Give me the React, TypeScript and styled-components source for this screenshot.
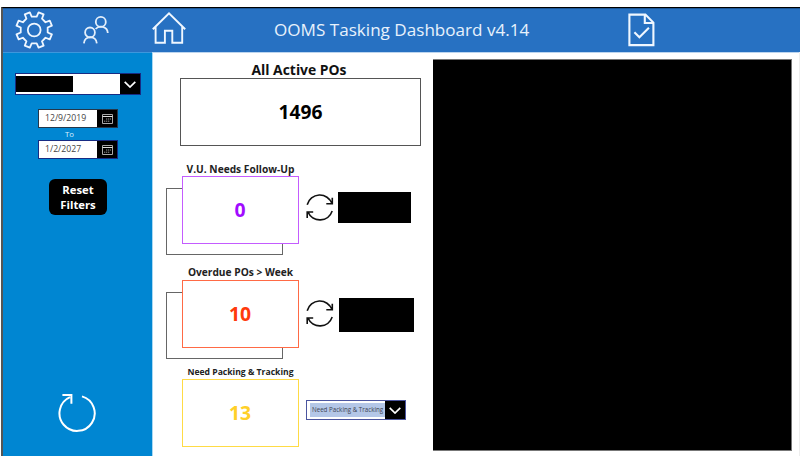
import React from "react";
import styled, { createGlobalStyle } from "styled-components";

const GlobalStyle = createGlobalStyle`
  *, *::before { box-sizing: border-box; }
  body { margin: 0; background: #fff; font-family: "Open Sans", sans-serif; overflow: hidden; }
  svg { display: block; flex: none; fill: none; }
`;

const Page = styled.div`
  width: 800px;
  height: 463px;
  padding: 7px 0 7px 1px;
`;

const Shell = styled.div`
  height: 449px;
  display: flex;
  flex-direction: column;
  border-top: 1px solid #000;
  border-left: 2px solid #555;
`;

const Header = styled.header`
  height: 44px;
  flex: none;
  display: flex;
  align-items: flex-start;
  background: #2771c2;
  border-top: 1px solid #1b5596;
`;

const IconButton = styled.span<{ $left: number; $top: number }>`
  margin: ${(p) => p.$top}px 0 0 ${(p) => p.$left}px;
`;

const Title = styled.h1`
  width: 256px;
  margin: 9px 0 0 88px;
  color: #e8f1fc;
  font-size: 17.1px;
  font-weight: 400;
  line-height: 24px;
  white-space: nowrap;
`;

const Body = styled.div`
  flex: 1;
  display: flex;
  border-right: 1px solid #eee;
`;

const Sidebar = styled.aside`
  width: 149px;
  display: flex;
  flex-direction: column;
  align-items: flex-start;
  background: #0086d2;
  border-top: 1px solid #3d97dc;
`;

const Select = styled.div<{ $width: number; $height: number; $border: string }>`
  width: ${(p) => p.$width}px;
  height: ${(p) => p.$height}px;
  display: flex;
  align-items: center;
  justify-content: space-between;
  background: #fff;
  border: 1px solid ${(p) => p.$border};
`;

const SidebarSelect = styled(Select)`
  margin: 20px 0 0 12px;
`;

const SelectArrow = styled.span`
  width: 20px;
  height: 100%;
  display: flex;
  align-items: center;
  justify-content: center;
  background: #000;
`;

const Redaction = styled.div<{ $width: number; $height: number }>`
  width: ${(p) => p.$width}px;
  height: ${(p) => p.$height}px;
  flex: none;
  background: #000;
`;

const DateRange = styled.div`
  margin: 14px 0 0 35px;
  width: 80px;
`;

const DateField = styled.div<{ $border: string }>`
  height: 19px;
  display: flex;
  border: 1px solid ${(p) => p.$border};
  background: #fff;
  color: #444;
  font-size: 8.7px;
  line-height: 16px;
`;

const DateText = styled.span`
  flex: 1;
  padding-left: 6px;
`;

const To = styled.div`
  height: 12px;
  color: #d9efff;
  font-size: 7.8px;
  line-height: 12px;
  text-align: center;
  padding-right: 17px;
`;

const ResetButton = styled.button`
  width: 58px;
  height: 36px;
  margin: 20px 0 0 46px;
  padding: 0;
  border: 0;
  border-radius: 6px;
  background: #000;
  color: #fff;
  font: 700 11.3px/15.5px "Open Sans", sans-serif;
`;

const Refresh = styled.div`
  margin: auto 0 24px 53px;
`;

const Content = styled.main`
  width: 281px;
  display: flex;
  flex-direction: column;
  align-items: flex-start;
  border-left: 1px solid #a9d8f2;
  border-top: 1px solid #bcd5ef;
`;

const Total = styled.section`
  width: 241px;
  margin: 7px 0 0 27px;
`;

const TotalLabel = styled.h2`
  height: 18px;
  margin: 0;
  font-size: 13.9px;
  font-weight: 700;
  line-height: 19px;
  text-align: center;
  padding-right: 3px;
  color: #111;
`;

const Card = styled.div<{ $color: string; $text: string }>`
  height: 68px;
  display: flex;
  align-items: center;
  justify-content: center;
  background: #fff;
  border: 1px solid ${(p) => p.$color};
  padding: 0 1px 2px 0;
  color: ${(p) => p.$text};
  font-size: 19.4px;
  font-weight: 700;
`;

const TotalCard = styled(Card)`
  font-size: 19.2px;
  padding-right: 0;
`;

const Metric = styled.section<{ $gap: number }>`
  margin: ${(p) => p.$gap}px 0 0 29px;
  display: grid;
  grid-template-columns: 117px auto;
  grid-template-rows: 14px 68px;
`;

const MetricLabel = styled.h3<{ $size: number; $height?: number }>`
  grid-column: 1 / -1;
  width: 117px;
  margin: 0;
  font-size: ${(p) => p.$size}px;
  font-weight: 700;
  line-height: ${(p) => p.$height ?? 14}px;
  text-align: center;
  white-space: nowrap;
  color: #222;
`;

/* The offset outline behind a card suggests a pile of orders. */
const Pile = styled.div<{ $stacked?: boolean }>`
  position: relative;
  z-index: 0;
  &::before {
    content: "";
    display: ${(p) => (p.$stacked ? "block" : "none")};
    position: absolute;
    z-index: -1;
    left: -16px;
    top: 12px;
    width: 117px;
    height: 67px;
    border: 1px solid #666;
  }
`;

const Actions = styled.div<{ $top: number; $gap?: number }>`
  margin-top: ${(p) => p.$top}px;
  padding-left: 7px;
  display: flex;
  align-items: flex-start;
  gap: ${(p) => p.$gap ?? 0}px;
`;

const Sync = styled.span`
  margin-top: 2px;
`;

const Selected = styled.span`
  margin-left: 3px;
  width: 75px;
  height: 14px;
  background: #b4c7e7;
  color: #3d4450;
  font-size: 6.2px;
  line-height: 13px;
  white-space: nowrap;
  padding-left: 2px;
`;

const Detail = styled.div`
  width: 359px;
  height: 392px;
  margin-top: 6px;
  background: #000;
  border: solid #777;
  border-width: 1px 1px 1px 0;
`;

const DetailPane = styled.section`
  flex: 1;
  border-top: 1px solid #bcd5ef;
`;

const Chevron = ({ size = 12 }: { size?: number }) => (
  <svg width={size} height={size / 2 + 1} viewBox="0 0 12 7" stroke="#fff" strokeWidth="1.7">
    <path d="M.7.8 6 6 11.3.8" />
  </svg>
);

const CalendarIcon = () => (
  <svg width="11" height="10" viewBox="0 0 11 10" stroke="#aaa">
    <path d="M.5.5h10v9H.5z" />
    <path d="M.5 2.5h10" stroke="#ddd" />
    <path d="M4 5h5M2 7.2h5.5" stroke="#999" strokeDasharray="1.3 .7" />
  </svg>
);

const SyncIcon = () => (
  <svg width="28" height="28" viewBox="0 0 28 28" stroke="#111" strokeWidth="1.6">
    <path d="M1.2 10.8A13 13 0 0 1 26 9.6M26.3 3.8v6h-6" />
    <path d="M26.2 17A13 13 0 0 1 2 18.2M1.2 24v-6h6" />
  </svg>
);

const gearPath = (() => {
  const points: string[] = [];
  for (let i = 0; i < 8; i++) {
    const corners: [number, number][] = [[-12, 13.7], [-8.6, 18.2], [8.6, 18.2], [12, 13.7]];
    corners.forEach(([offset, radius]) => {
      const angle = ((i * 45 + 22.5 + offset) * Math.PI) / 180;
      points.push(`${(19.2 + radius * Math.cos(angle)).toFixed(2)} ${(19 + radius * Math.sin(angle)).toFixed(2)}`);
    });
  }
  return `M${points.join("L")}Z`;
})();

const GearIcon = () => (
  <svg width="38" height="38" viewBox="0 0 38 38" stroke="#f0f7ff" strokeWidth="1.8" strokeLinejoin="round">
    <path d={gearPath} />
    <circle cx="19.2" cy="19" r="6.4" />
  </svg>
);

const PeopleIcon = () => (
  <svg width="26" height="28" viewBox="0 0 26 28" stroke="#e4effb" strokeWidth="1.8">
    <circle cx="17.8" cy="5.9" r="5" />
    <path d="M12.6 13c3.4-3.8 11.6-3 12.2 4" />
    <circle cx="7" cy="16.4" r="4.9" />
    <path d="M.9 27.4c.4-8.2 12.5-8.2 12.9 0" />
  </svg>
);

const HomeIcon = () => (
  <svg width="34" height="32" viewBox="0 0 34 32" stroke="#f0f7ff" strokeWidth="1.9">
    <path d="M.8 17.3 17 1.4l16.2 15.9M3.6 15v15.8h9.3V18.7h7.4v12.1h9.9V15" />
  </svg>
);

const TaskIcon = () => (
  <svg width="27" height="34" viewBox="0 0 27 34" stroke="#f0f7ff" strokeWidth="2.1">
    <path d="M1.4 1.6h16l8 8v22.5h-24zM16.8 1.6v8.4h8.6" />
    <path d="m6.4 19.2 5 5 9.5-9.4" />
  </svg>
);

const RefreshIcon = () => (
  <svg width="40" height="40" viewBox="0 0 40 40" stroke="#fff" strokeWidth="2">
    <path d="M14 5.2A17.6 17.6 0 1 0 26 4.4M6.4 3h9v8.8" />
  </svg>
);

export default function App() {
  return (
    <Page>
      <GlobalStyle />
      <Shell>
        <Header>
          <IconButton $left={12} $top={2}><GearIcon /></IconButton>
          <IconButton $left={30} $top={7}><PeopleIcon /></IconButton>
          <IconButton $left={43} $top={3}><HomeIcon /></IconButton>
          <Title>OOMS Tasking Dashboard v4.14</Title>
          <IconButton $left={98} $top={4}><TaskIcon /></IconButton>
        </Header>
        <Body>
          <Sidebar>
            <SidebarSelect $width={126} $height={22} $border="#172b83">
              <Redaction $width={57} $height={16} />
              <SelectArrow><Chevron /></SelectArrow>
            </SidebarSelect>
            <DateRange>
              <DateField $border="#24374a">
                <DateText>12/9/2019</DateText>
                <SelectArrow><CalendarIcon /></SelectArrow>
              </DateField>
              <To>To</To>
              <DateField $border="#172b83">
                <DateText>1/2/2027</DateText>
                <SelectArrow><CalendarIcon /></SelectArrow>
              </DateField>
            </DateRange>
            <ResetButton>Reset<br />Filters</ResetButton>
            <Refresh><RefreshIcon /></Refresh>
          </Sidebar>
          <Content>
            <Total>
              <TotalLabel>All Active POs</TotalLabel>
              <TotalCard $color="#555" $text="#000">1496</TotalCard>
            </Total>
            <Metric $gap={16}>
              <MetricLabel $size={10.2}>V.U. Needs Follow-Up</MetricLabel>
              <Pile $stacked><Card $color="#c45cff" $text="#a10cff">0</Card></Pile>
              <Actions $top={16} $gap={4}>
                <Sync><SyncIcon /></Sync>
                <Redaction $width={73} $height={31} />
              </Actions>
            </Metric>
            <Metric $gap={22}>
              <MetricLabel $size={10.2} $height={12}>Overdue POs &gt; Week</MetricLabel>
              <Pile $stacked><Card $color="#ff6a45" $text="#ff3a0c">10</Card></Pile>
              <Actions $top={18} $gap={5}>
                <Sync><SyncIcon /></Sync>
                <Redaction $width={75} $height={34} />
              </Actions>
            </Metric>
            <Metric $gap={17}>
              <MetricLabel $size={8.6} $height={15}>Need Packing &amp; Tracking</MetricLabel>
              <Pile><Card $color="#ffdb45" $text="#ffd028">13</Card></Pile>
              <Actions $top={21}>
                <Select $width={100} $height={20} $border="#4b559f">
                  <Selected>Need Packing &amp; Tracking</Selected>
                  <SelectArrow><Chevron /></SelectArrow>
                </Select>
              </Actions>
            </Metric>
          </Content>
          <DetailPane>
            <Detail />
          </DetailPane>
        </Body>
      </Shell>
    </Page>
  );
}
